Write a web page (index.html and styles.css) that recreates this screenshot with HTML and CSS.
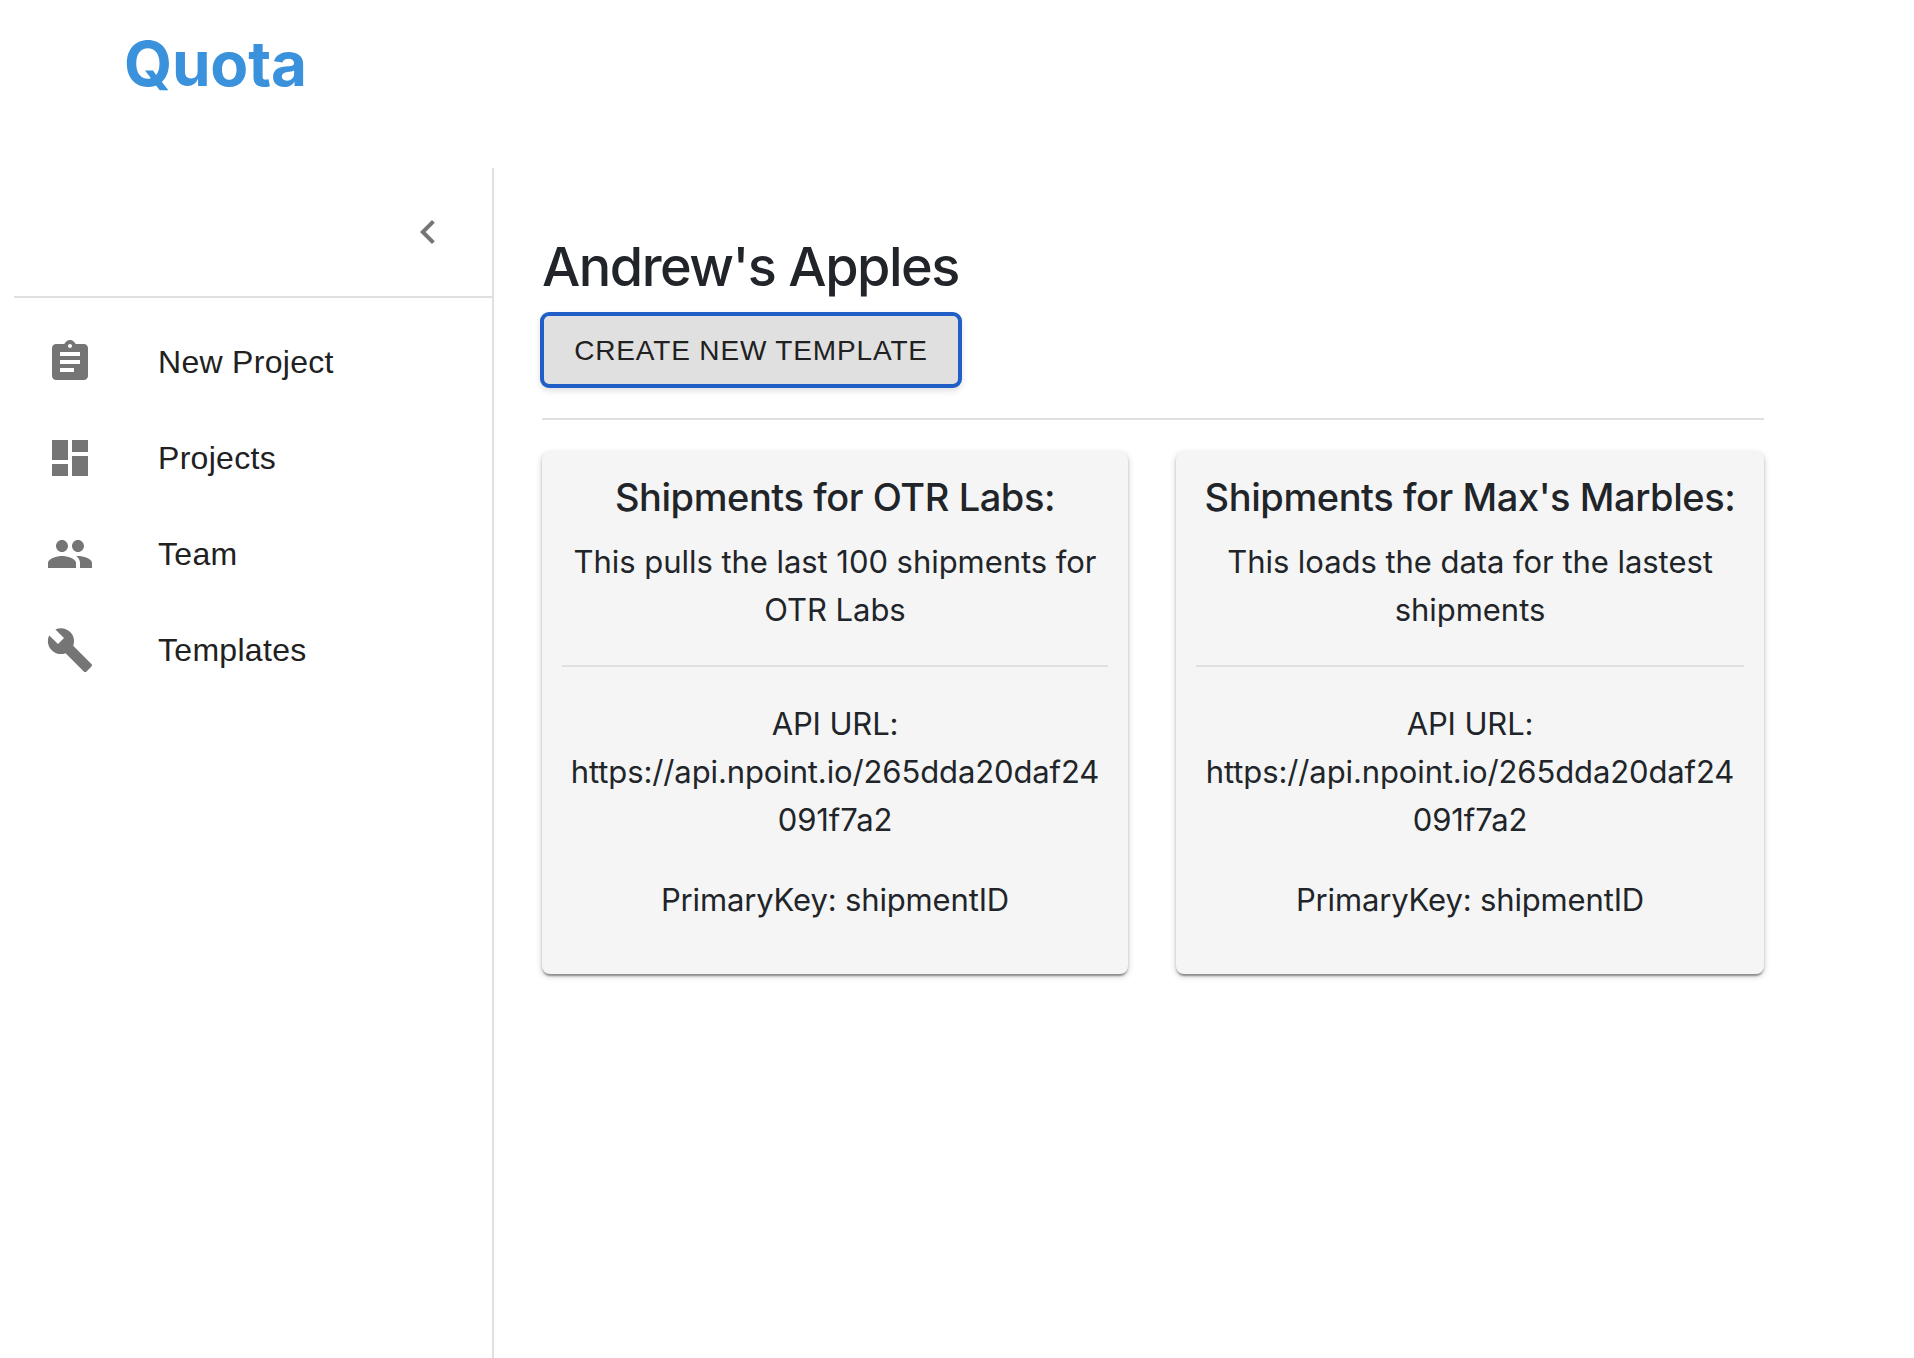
FILE: index.html
```html
<!DOCTYPE html>
<html lang="en">
<head>
<meta charset="utf-8">
<title>Quota</title>
<link rel="stylesheet" href="styles.css">
</head>
<body>
<header class="topbar"><div class="logo">Quota</div></header>
<div class="layout">
  <aside class="sidebar">
    <div class="toolbar">
      <svg class="chevron" viewBox="0 0 24 24"><path d="M15.41 7.41L14 6l-6 6 6 6 1.41-1.41L10.83 12z"/></svg>
    </div>
    <nav class="nav">
      <a class="nav-item">
        <span class="nav-icon"><svg viewBox="0 0 24 24"><path d="M19 3h-4.18C14.4 1.84 13.3 1 12 1c-1.3 0-2.4.84-2.82 2H5c-1.1 0-2 .9-2 2v14c0 1.1.9 2 2 2h14c1.1 0 2-.9 2-2V5c0-1.1-.9-2-2-2zm-7 0c.55 0 1 .45 1 1s-.45 1-1 1-1-.45-1-1 .45-1 1-1zm2 14H7v-2h7v2zm3-4H7v-2h10v2zm0-4H7V7h10v2z"/></svg></span>
        <span class="nav-label">New Project</span>
      </a>
      <a class="nav-item">
        <span class="nav-icon"><svg viewBox="0 0 24 24"><path d="M3 13h8V3H3v10zm0 8h8v-6H3v6zm10 0h8V11h-8v10zm0-18v6h8V3h-8z"/></svg></span>
        <span class="nav-label">Projects</span>
      </a>
      <a class="nav-item">
        <span class="nav-icon"><svg viewBox="0 0 24 24"><path d="M16 11c1.66 0 2.99-1.34 2.99-3S17.66 5 16 5c-1.66 0-3 1.34-3 3s1.34 3 3 3zm-8 0c1.66 0 2.99-1.34 2.99-3S9.66 5 8 5C6.34 5 5 6.34 5 8s1.34 3 3 3zm0 2c-2.33 0-7 1.17-7 3.5V19h14v-2.5c0-2.33-4.67-3.5-7-3.5zm8 0c-.29 0-.62.02-.97.05 1.16.84 1.97 1.97 1.97 3.45V19h6v-2.5c0-2.33-4.67-3.5-7-3.5z"/></svg></span>
        <span class="nav-label">Team</span>
      </a>
      <a class="nav-item">
        <span class="nav-icon"><svg viewBox="0 0 24 24"><path d="M22.7 19l-9.1-9.1c.9-2.3.4-5-1.5-6.9-2-2-5-2.4-7.4-1.3L9 6 6 9 1.6 4.7C.4 7.1.9 10.1 2.9 12.1c1.9 1.9 4.6 2.4 6.9 1.5l9.1 9.1c.4.4 1 .4 1.4 0l2.3-2.3c.5-.4.5-1.1.1-1.4z"/></svg></span>
        <span class="nav-label">Templates</span>
      </a>
    </nav>
  </aside>
  <main class="main">
    <h1 class="title">Andrew's Apples</h1>
    <button class="create-btn" type="button">Create New Template</button>
    <hr class="rule">
    <section class="cards">
      <article class="card">
        <h2 class="card-title">Shipments for OTR Labs:</h2>
        <p class="card-desc">This pulls the last 100 shipments for OTR Labs</p>
        <hr class="card-rule">
        <p class="card-url">API URL: https://api.npoint.io/265dda20daf24091f7a2</p>
        <p class="card-key">PrimaryKey: shipmentID</p>
      </article>
      <article class="card">
        <h2 class="card-title">Shipments for Max's Marbles:</h2>
        <p class="card-desc">This loads the data for the lastest shipments</p>
        <hr class="card-rule">
        <p class="card-url">API URL: https://api.npoint.io/265dda20daf24091f7a2</p>
        <p class="card-key">PrimaryKey: shipmentID</p>
      </article>
    </section>
  </main>
</div>
</body>
</html>
```
FILE: styles.css
```css
* { box-sizing: border-box; }
html, body { height: 100%; }
body {
  margin: 0;
  background: #fff;
  color: #212529;
  font-family: Inter, "Liberation Sans", sans-serif;
  overflow: hidden;
}
.topbar { height: 168px; padding: 26px 0 0 124px; }
.logo {
  font-size: 62px;
  line-height: 75px;
  font-weight: 700;
  letter-spacing: -0.2px;
  color: #3b92dc;
}
.layout { display: flex; height: 1190px; }
.sidebar {
  width: 478px;
  margin-left: 14px;
  flex: none;
  border-right: 2px solid #e0e0e0;
  box-sizing: content-box;
}
.toolbar {
  height: 130px;
  padding: 40px 40px 0 0;
  display: flex;
  justify-content: flex-end;
  align-items: flex-start;
  border-bottom: 2px solid #e0e0e0;
}
.chevron { width: 48px; height: 48px; fill: #757575; }
.nav { padding-top: 16px; }
.nav-item {
  display: flex;
  align-items: center;
  height: 96px;
  padding-left: 32px;
}
.nav-icon { width: 112px; height: 48px; flex: none; }
.nav-icon svg { width: 48px; height: 48px; fill: #757575; display: block; }
.nav-label {
  font-family: "Liberation Sans", Arial, sans-serif;
  font-size: 32px;
  line-height: 46px;
  padding-bottom: 1px;
  letter-spacing: 0.3px;
  color: #212121;
}
.main { width: 1222px; margin-left: 48px; flex: none; padding-top: 64px; }
.title {
  margin: 0;
  font-size: 54px;
  line-height: 70px;
  font-weight: 500;
  letter-spacing: -1.5px;
}
.create-btn {
  display: block;
  width: 422px;
  height: 76px;
  margin: 10px 0 0 -2px;
  padding: 2px 0 0;
  background: #e0e0e0;
  border: 4px solid #1f5fc7;
  border-radius: 9px;
  box-shadow: 0 3px 6px rgba(0,0,0,.12);
  font-family: "Liberation Sans", Arial, sans-serif;
  font-size: 28px;
  letter-spacing: 0.85px;
  text-transform: uppercase;
  color: #212121;
}
.rule { margin: 30px 0 32px; border: 0; border-top: 2px solid #e0e0e0; }
.cards { display: grid; grid-template-columns: 586fr 588fr; gap: 48px; }
.card {
  height: 522px;
  padding: 18px 20px 0;
  background: #f5f5f5;
  border-radius: 8px;
  box-shadow: 0 2px 6px rgba(0,0,0,.22), 0 2px 2px rgba(0,0,0,.2), 0 4px 2px -2px rgba(0,0,0,.2);
  text-align: center;
}
.card-title { margin: 0; font-size: 38px; line-height: 54px; font-weight: 500; letter-spacing: -0.42px; }
.card-desc { margin: 14px 0 0; font-size: 31px; line-height: 48px; letter-spacing: -0.05px; }
.card-rule { margin: 31px 0 0; border: 0; border-top: 2px solid #e0e0e0; }
.card-url { margin: 33px 0 0; padding: 0 4px; font-size: 31px; line-height: 48px; overflow-wrap: anywhere; letter-spacing: -0.12px; }
.card-key { margin: 32px 0 0; font-size: 31px; line-height: 48px; letter-spacing: -0.15px; }
```
